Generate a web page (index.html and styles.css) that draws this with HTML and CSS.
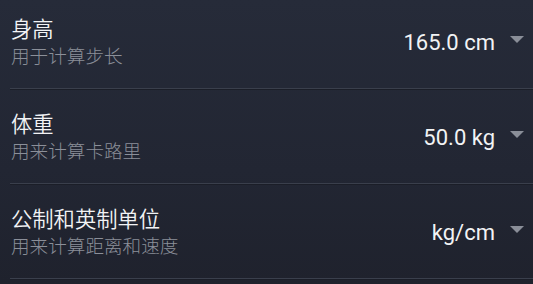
FILE: index.html
```html
<!DOCTYPE html>
<html lang="zh">
<head>
<meta charset="utf-8">
<link rel="stylesheet" href="styles.css">
</head>
<body>
<div class="list">
  <div class="row">
    <div class="text">
      <div class="title">身高</div>
      <div class="sub">用于计算步长</div>
    </div>
    <div class="value">165.0 cm</div>
    <div class="arrow"></div>
  </div>
  <div class="row">
    <div class="text">
      <div class="title">体重</div>
      <div class="sub">用来计算卡路里</div>
    </div>
    <div class="value">50.0 kg</div>
    <div class="arrow"></div>
  </div>
  <div class="row">
    <div class="text">
      <div class="title">公制和英制单位</div>
      <div class="sub">用来计算距离和速度</div>
    </div>
    <div class="value">kg/cm</div>
    <div class="arrow"></div>
  </div>
</div>
</body>
</html>
```
FILE: styles.css
```css
html, body {
  margin: 0;
  padding: 0;
  height: 100%;
}
body {
  background: linear-gradient(to bottom, #262b39 0%, #222633 60%, #1f222d 100%);
  font-family: Roboto, "Noto Sans CJK SC", sans-serif;
  overflow: hidden;
}
.list {
  margin-top: -6px;
}
.row {
  height: 94px;
  box-sizing: content-box;
  margin-left: 10px;
  padding-left: 1px;
  display: flex;
  align-items: center;
  border-bottom: 1px solid #3a3f4c;
  box-shadow: 0 1px 0 #1b1e28;
}
.text {
  flex: 1;
  align-self: flex-start;
  padding-top: 21px;
}
.title {
  font-family: "Noto Sans CJK SC", sans-serif;
  font-size: 21.3px;
  font-weight: 350;
  line-height: 26px;
  color: #f2f3f5;
}
.sub {
  font-family: "Noto Sans CJK SC", sans-serif;
  font-size: 18.6px;
  font-weight: 300;
  line-height: 28px;
  color: #8b8f99;
}
.value {
  font-family: Roboto, sans-serif;
  font-size: 22px;
  color: #f2f3f5;
  margin-top: 2px;
}
.arrow {
  width: 0;
  height: 0;
  border-left: 7px solid transparent;
  border-right: 7px solid transparent;
  border-top: 7px solid #8a8e98;
  margin-left: 15px;
  margin-right: 9px;
  margin-top: -4px;
}
```
